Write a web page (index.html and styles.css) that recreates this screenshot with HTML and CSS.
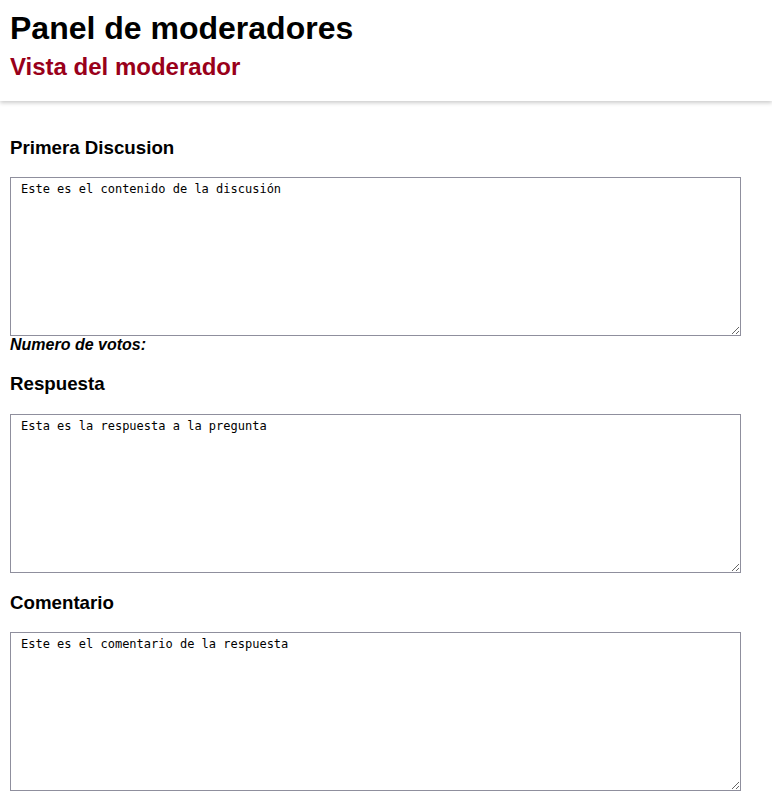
FILE: index.html
```html
<!DOCTYPE html>
<html lang="es">
<head>
<meta charset="utf-8">
<title>Panel de moderadores</title>
<link rel="stylesheet" href="styles.css">
</head>
<body>
<header class="header">
  <h1 class="title">Panel de moderadores</h1>
  <h2 class="subtitle">Vista del moderador</h2>
</header>
<main class="main">
  <section class="block">
    <h3 class="block-title">Primera Discusion</h3>
    <textarea class="box">Este es el contenido de la discusión</textarea>
    <div class="votes">Numero de votos:</div>
  </section>
  <section class="block">
    <h3 class="block-title">Respuesta</h3>
    <textarea class="box">Esta es la respuesta a la pregunta</textarea>
  </section>
  <section class="block">
    <h3 class="block-title">Comentario</h3>
    <textarea class="box">Este es el comentario de la respuesta</textarea>
  </section>
</main>
</body>
</html>
```
FILE: styles.css
```css
html, body {
  margin: 0;
  padding: 0;
  background: #ffffff;
  font-family: "Liberation Sans", Arial, sans-serif;
  color: #000;
}

.header {
  padding: 10px 10px 20px;
  background: #fff;
  box-shadow: 0 2px 4px rgba(0, 0, 0, 0.2);
}

.title {
  margin: 0 0 6px;
  font-size: 32px;
  font-weight: bold;
}

.subtitle {
  margin: 0;
  font-size: 24px;
  font-weight: bold;
  color: #99001a;
}

.main {
  padding: 17px 10px 20px;
}

.block-title {
  margin: 18.72px 0;
  font-size: 18.72px;
  font-weight: bold;
}

.box {
  display: block;
  box-sizing: border-box;
  width: 731px;
  height: 159px;
  margin: 0;
  padding: 4px 10px;
  border: 1px solid #8f8f9d;
  font-family: "DejaVu Sans Mono", monospace;
  font-size: 12px;
  color: #000;
  background: #fff;
  resize: both;
}

.votes {
  font-size: 16px;
  font-weight: bold;
  font-style: italic;
}
```
